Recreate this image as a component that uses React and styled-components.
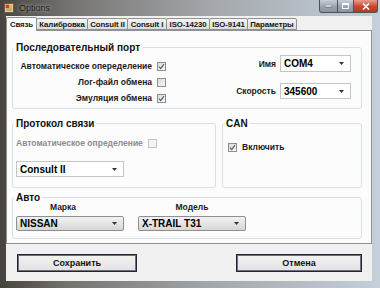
import React from "react";
import styled, { createGlobalStyle } from "styled-components";

const GlobalStyle = createGlobalStyle`
  html, body {
    margin: 0;
    padding: 0;
  }
  body {
    width: 380px;
    height: 288px;
    overflow: hidden;
    background: #2b2b2b;
    font-family: "Liberation Sans", Arial, sans-serif;
  }
`;

const Window = styled.div`
  width: 380px;
  height: 288px;
  display: flex;
  flex-direction: column;
  background: linear-gradient(90deg, #47433f 0%, #75736f 18%, #a3a7ab 55%, #c4cfd9 100%);
`;

const TitleBar = styled.div`
  height: 16px;
  display: flex;
  align-items: center;
  padding-left: 4px;
`;

const Caption = styled.span`
  margin-left: 5px;
  font-size: 9px;
  color: #1d1d1d;
  text-shadow: 0 0 4px rgba(255, 255, 255, 0.7);
`;

const Controls = styled.div`
  margin-left: auto;
  margin-right: 2px;
  align-self: flex-start;
  display: flex;
  height: 13px;
`;

const CtrlButton = styled.div`
  width: ${(p) => p.$w}px;
  height: 13px;
  box-sizing: border-box;
  border: 1px solid #4d5258;
  border-top: none;
  margin-left: -1px;
  display: flex;
  align-items: center;
  justify-content: center;
  background: ${(p) =>
    p.$close
      ? "linear-gradient(#e3a08f, #c9462f 55%, #b83a24)"
      : "linear-gradient(#c9cfd6, #9aa3ad 55%, #8b949e)"};
  border-radius: ${(p) => (p.$close ? "0 0 3px 0" : p.$first ? "0 0 0 3px" : "0")};
`;

const Client = styled.div`
  flex: 1;
  margin: 0 8px 0 6px;
  background: #f0f0f0;
  display: flex;
  flex-direction: column;
`;

const BottomFrame = styled.div`
  height: 7px;
`;

const TabStrip = styled.div`
  height: 14px;
  display: flex;
  align-items: flex-end;
  background: #f0f0f0;
`;

const Tab = styled.div`
  width: ${(p) => p.$w}px;
  height: ${(p) => (p.$active ? 14 : 12)}px;
  box-sizing: border-box;
  margin-left: -1px;
  margin-bottom: ${(p) => (p.$active ? -1 : 0)}px;
  position: relative;
  z-index: ${(p) => (p.$active ? 2 : 1)};
  border: 1px solid #8d9196;
  border-bottom: ${(p) => (p.$active ? "none" : "1px solid #8d9196")};
  border-radius: 2px 2px 0 0;
  background: ${(p) => (p.$active ? "#fcfcfc" : "linear-gradient(#f4f4f4, #dcdcdc)")};
  font-size: 7.8px;
  font-weight: bold;
  letter-spacing: -0.1px;
  color: #151515;
  display: flex;
  align-items: center;
  justify-content: center;
  white-space: nowrap;
  overflow: hidden;
  &:first-child {
    margin-left: 0;
  }
`;

const TabPage = styled.div`
  height: 214px;
  box-sizing: border-box;
  border: 1px solid #8d9196;
  background: #fcfcfc;
  padding: 10px 9px 0 5px;
  display: flex;
  flex-direction: column;
`;

const Group = styled.fieldset`
  margin: 0;
  margin-top: ${(p) => p.$mt || 0}px;
  padding: 0 10px 0 3px;
  min-width: 0;
  height: ${(p) => p.$h}px;
  box-sizing: border-box;
  flex: ${(p) => p.$flex || "none"};
  border: 1px solid #d9e0e5;
  border-radius: 3px;
`;

const Legend = styled.legend`
  padding: 0 2px;
  margin-left: -2px;
  font-size: 10px;
  font-weight: bold;
  line-height: 13px;
  color: #111;
`;

const SplitRow = styled.div`
  display: flex;
  gap: 6px;
  margin-top: ${(p) => p.$mt}px;
`;

const PortBody = styled.div`
  display: flex;
  justify-content: space-between;
`;

const CheckColumn = styled.div`
  width: 150px;
  padding-top: 4px;
  display: flex;
  flex-direction: column;
`;

const CheckRow = styled.div`
  height: 16px;
  display: flex;
  align-items: center;
  justify-content: ${(p) => (p.$left ? "flex-start" : "flex-end")};
  gap: 5px;
`;

const Label = styled.span`
  font-size: 8.5px;
  font-weight: bold;
  color: ${(p) => (p.$disabled ? "#8c8c8c" : "#1a1a1a")};
  white-space: nowrap;
`;

const Box = styled.span`
  width: 9px;
  height: 9px;
  box-sizing: border-box;
  border: 1px solid ${(p) => (p.$disabled ? "#c4c4c4" : "#8e8f8f")};
  background: ${(p) => (p.$disabled ? "#f4f4f4" : "linear-gradient(135deg, #dcdcdc, #f6f6f6)")};
  display: flex;
  align-items: center;
  justify-content: center;
`;

const FieldColumn = styled.div`
  display: flex;
  flex-direction: column;
  gap: 11px;
  padding-top: 1px;
`;

const FieldRow = styled.div`
  display: flex;
  align-items: center;
  justify-content: flex-end;
  gap: 4px;
`;

const Combo = styled.div`
  width: ${(p) => p.$w}px;
  height: ${(p) => p.$h || 16}px;
  box-sizing: border-box;
  border: 1px solid ${(p) => (p.$list ? "#8e8f8f" : "#c2c6ca")};
  border-radius: ${(p) => (p.$list ? 2 : 0)}px;
  background: ${(p) => (p.$list ? "linear-gradient(#f2f2f2, #e4e4e4 50%, #d6d6d6)" : "#fff")};
  display: flex;
  align-items: center;
  padding: 0 6px 0 3px;
  font-size: 10px;
  font-weight: bold;
  color: #000;
`;

const ComboText = styled.span`
  flex: 1;
  white-space: nowrap;
`;

const ProtoBody = styled.div`
  padding-top: 5px;
  display: flex;
  flex-direction: column;
  gap: 10px;
`;

const CanBody = styled.div`
  padding: 9px 0 0 2px;
`;

const AutoBody = styled.div`
  display: flex;
  gap: 14px;
  margin-top: -2px;
`;

const AutoColumn = styled.div`
  width: 108px;
  display: flex;
  flex-direction: column;
  gap: 4px;
`;

const ColumnTitle = styled.div`
  height: 10px;
  line-height: 10px;
  text-align: center;
  padding-right: ${(p) => p.$shift || 0}px;
  font-size: 8.5px;
  font-weight: bold;
  color: #1a1a1a;
`;

const ButtonRow = styled.div`
  display: flex;
  justify-content: space-between;
  padding: 10px 10px 0 11px;
`;

const Button = styled.div`
  width: ${(p) => p.$w}px;
  height: 18px;
  box-sizing: border-box;
  border: 1px solid #24232f;
  box-shadow: inset 0 0 0 1px #6e6c80;
  background: linear-gradient(#f3f3f3, #e2e2e2);
  display: flex;
  align-items: center;
  justify-content: center;
  font-size: 9px;
  font-weight: bold;
  color: #111;
`;

const Arrow = () => (
  <svg width="5" height="3" viewBox="0 0 5 3">
    <path d="M0 0h5L2.5 3z" fill="#333" />
  </svg>
);

const Check = ({ checked, disabled }) => (
  <Box $disabled={disabled}>
    {checked && (
      <svg width="7" height="7" viewBox="0 0 7 7">
        <path d="M1 3.6 2.8 5.4 6 1.2" fill="none" stroke="#56677a" strokeWidth="1.3" />
      </svg>
    )}
  </Box>
);

const AppIcon = () => (
  <svg width="10" height="10" viewBox="0 0 10 10">
    <rect x="0.5" y="0.5" width="9" height="9" fill="#e8e2d0" stroke="#6b5a3c" />
    <rect x="1.5" y="1.5" width="3.5" height="3.5" fill="#d23a2a" />
    <rect x="5" y="1.5" width="3.5" height="3.5" fill="#e8b82c" />
    <rect x="1.5" y="5" width="7" height="3.5" fill="#c9a97a" />
  </svg>
);

const tabs = [
  ["Связь", 31],
  ["Калибровка", 52],
  ["Consult II", 41],
  ["Consult I", 40],
  ["ISO-14230", 44],
  ["ISO-9141", 39],
  ["Параметры", 50],
];

function App() {
  return (
    <Window>
      <GlobalStyle />
      <TitleBar>
        <AppIcon />
        <Caption>Options</Caption>
        <Controls>
          <CtrlButton $w={19} $first>
            <svg width="7" height="3" viewBox="0 0 7 3">
              <rect x="0" y="0" width="7" height="2" fill="#fff" stroke="#333" strokeWidth="0.5" />
            </svg>
          </CtrlButton>
          <CtrlButton $w={17}>
            <svg width="7" height="6" viewBox="0 0 7 6">
              <rect x="0.5" y="0.5" width="6" height="5" fill="none" stroke="#fff" strokeWidth="1" />
              <rect x="0.5" y="0.5" width="6" height="1.5" fill="#fff" />
            </svg>
          </CtrlButton>
          <CtrlButton $w={25} $close>
            <svg width="8" height="7" viewBox="0 0 8 7">
              <path d="M1 0.5 7 6.5M7 0.5 1 6.5" stroke="#fff" strokeWidth="1.6" />
            </svg>
          </CtrlButton>
        </Controls>
      </TitleBar>
      <Client>
        <TabStrip>
          {tabs.map(([name, w], i) => (
            <Tab key={name} $w={w} $active={i === 0}>
              {name}
            </Tab>
          ))}
        </TabStrip>
        <TabPage>
          <Group $h={68}>
            <Legend>Последовательный порт</Legend>
            <PortBody>
              <CheckColumn>
                <CheckRow>
                  <Label>Автоматическое опеределение</Label>
                  <Check checked />
                </CheckRow>
                <CheckRow>
                  <Label>Лог-файл обмена</Label>
                  <Check />
                </CheckRow>
                <CheckRow>
                  <Label>Эмуляция обмена</Label>
                  <Check checked />
                </CheckRow>
              </CheckColumn>
              <FieldColumn>
                <FieldRow>
                  <Label>Имя</Label>
                  <Combo $w={71} $h={17}>
                    <ComboText>COM4</ComboText>
                    <Arrow />
                  </Combo>
                </FieldRow>
                <FieldRow>
                  <Label>Скорость</Label>
                  <Combo $w={71}>
                    <ComboText>345600</ComboText>
                    <Arrow />
                  </Combo>
                </FieldRow>
              </FieldColumn>
            </PortBody>
          </Group>
          <SplitRow $mt={8}>
            <Group $h={71} $flex="0 0 204px">
              <Legend>Протокол связи</Legend>
              <ProtoBody>
                <CheckRow $left>
                  <Label $disabled>Автоматическое определение</Label>
                  <Check disabled />
                </CheckRow>
                <Combo $w={108}>
                  <ComboText>Consult II</ComboText>
                  <Arrow />
                </Combo>
              </ProtoBody>
            </Group>
            <Group $h={71} $flex="1">
              <Legend>CAN</Legend>
              <CanBody>
                <CheckRow $left>
                  <Check checked />
                  <Label>Включить</Label>
                </CheckRow>
              </CanBody>
            </Group>
          </SplitRow>
          <Group $h={48} $mt={3}>
            <Legend>Авто</Legend>
            <AutoBody>
              <AutoColumn>
                <ColumnTitle $shift={14}>Марка</ColumnTitle>
                <Combo $w={108} $h={15} $list>
                  <ComboText>NISSAN</ComboText>
                  <Arrow />
                </Combo>
              </AutoColumn>
              <AutoColumn>
                <ColumnTitle>Модель</ColumnTitle>
                <Combo $w={108} $h={15} $list>
                  <ComboText>X-TRAIL T31</ComboText>
                  <Arrow />
                </Combo>
              </AutoColumn>
            </AutoBody>
          </Group>
        </TabPage>
        <ButtonRow>
          <Button $w={120}>Сохранить</Button>
          <Button $w={126}>Отмена</Button>
        </ButtonRow>
      </Client>
      <BottomFrame />
    </Window>
  );
}

export default App;
